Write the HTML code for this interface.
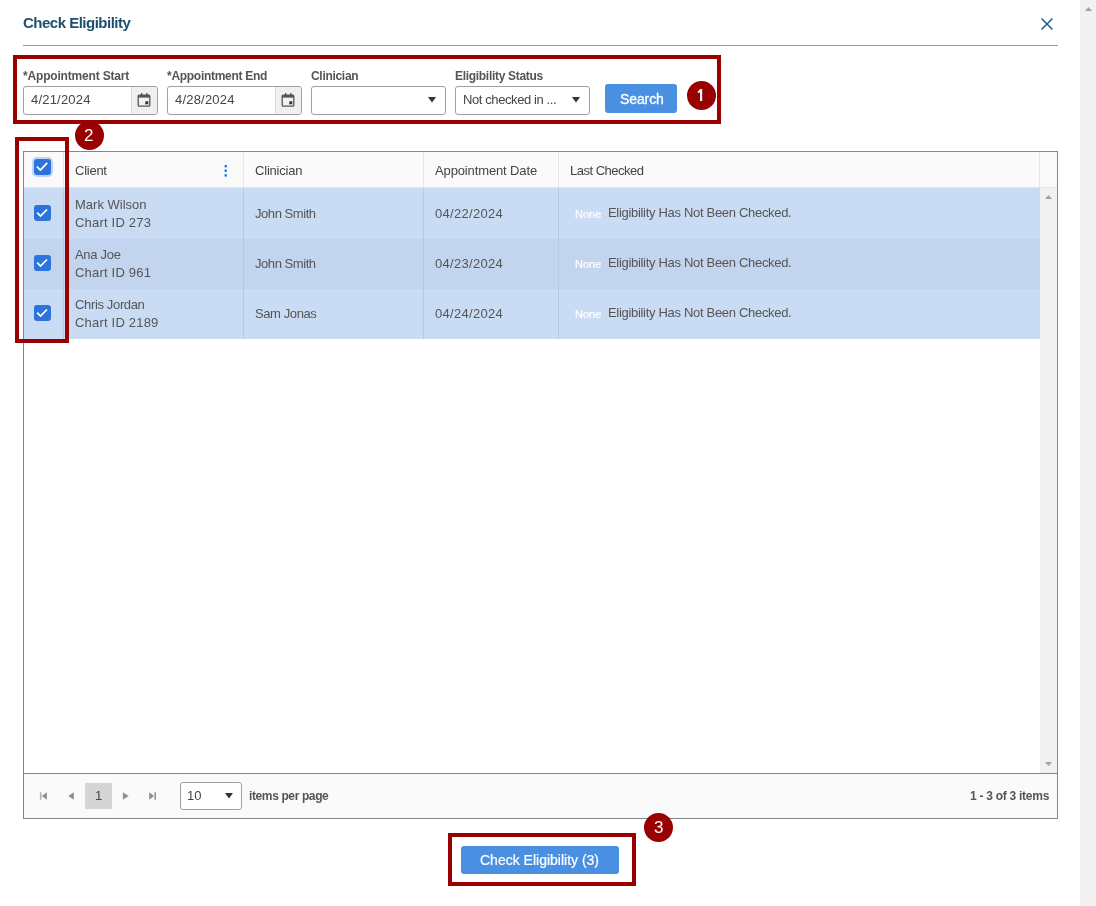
<!DOCTYPE html>
<html><head><meta charset="utf-8">
<style>
*{box-sizing:border-box;margin:0;padding:0}
html,body{width:1096px;height:906px;overflow:hidden;background:#fff;font-family:"Liberation Sans",sans-serif;color:#444}
div,span{position:absolute;white-space:nowrap;will-change:transform}
.t13{font-size:13px;color:#555}
.lbl{font-size:12px;font-weight:bold;color:#555;top:69px}
.inp{top:86px;height:29px;border:1px solid #a0a0a0;border-radius:3px;background:#fff;width:135px}
.cal{left:107px;top:0;width:26px;height:27px;background:#f0f0f0;border-left:1px solid #dcdcdc;border-radius:0 2px 2px 0}
.btn{background:#4a90e2;border-radius:3px}
.red{border:4px solid #990000}
.badge{width:29px;height:29px;border-radius:50%;background:#990000}
.bt{font-size:17px;color:#fff}
.hd{font-size:13px;color:#444;top:163px}
.cell{font-size:13px;color:#555}
.vd{width:1px}
.cb{width:17px;height:16px;border-radius:3px;background:#2c74db;left:34px}
.none{font-size:11px;color:#fff;-webkit-text-stroke:0.2px #fff}
</style></head><body>
<!-- page scrollbar -->
<div style="left:1080px;top:0;width:16px;height:906px;background:#f1f1f1"></div>

<div style="left:23px;top:14px;font-size:15px;font-weight:bold;color:#1f4f6e;letter-spacing:-0.5px">Check Eligibility</div>
<div style="left:23px;top:45px;width:1035px;height:1px;background:#9a9a9a"></div>

<!-- filters -->
<div class="lbl" style="left:23px;letter-spacing:-0.18px">*Appointment Start</div>
<div class="lbl" style="left:167px;letter-spacing:-0.29px">*Appointment End</div>
<div class="lbl" style="left:311px;letter-spacing:-0.3px">Clinician</div>
<div class="lbl" style="left:455px;letter-spacing:-0.3px">Eligibility Status</div>

<div class="inp" style="left:23px"><div class="t13" style="left:7px;top:5px;color:#444;letter-spacing:0.2px">4/21/2024</div><div class="cal"></div></div>
<div class="inp" style="left:167px"><div class="t13" style="left:7px;top:5px;color:#444;letter-spacing:0.2px">4/28/2024</div><div class="cal"></div></div>
<div class="inp" style="left:311px"></div>
<div class="inp" style="left:455px"><div class="t13" style="left:7px;top:5px;color:#444;letter-spacing:-0.4px">Not checked in ...</div></div>
<div class="btn" style="left:605px;top:84px;width:72px;height:29px"><div style="left:15px;top:7px;font-size:14px;color:#fff;letter-spacing:-0.1px;-webkit-text-stroke:0.3px #fff">Search</div></div>

<div class="red" style="left:13px;top:55px;width:708px;height:69px"></div>
<div class="badge" style="left:687px;top:81px"></div>

<!-- table -->
<div style="left:23px;top:151px;width:1035px;height:668px;border:1px solid #858585;background:#fff"></div>
<div style="left:24px;top:152px;width:1033px;height:35px;background:#fafafa"></div>
<div style="left:24px;top:187px;width:1033px;height:1px;background:#e4e4e4"></div>
<div class="vd" style="left:63px;top:152px;height:35px;background:#e6e6e6"></div>
<div class="vd" style="left:243px;top:152px;height:35px;background:#e6e6e6"></div>
<div class="vd" style="left:423px;top:152px;height:35px;background:#e6e6e6"></div>
<div class="vd" style="left:558px;top:152px;height:35px;background:#e6e6e6"></div>
<div class="vd" style="left:1039px;top:152px;height:35px;background:#e6e6e6"></div>

<div style="left:24px;top:188px;width:1016px;height:51px;background:#cadcf4"></div>
<div style="left:24px;top:239px;width:1016px;height:50px;background:#c3d5ee"></div>
<div style="left:24px;top:289px;width:1016px;height:50px;background:#cadcf4"></div>
<div class="vd" style="left:63px;top:188px;height:151px;background:#b7c9e2"></div>
<div class="vd" style="left:243px;top:188px;height:151px;background:#b7c9e2"></div>
<div class="vd" style="left:423px;top:188px;height:151px;background:#b7c9e2"></div>
<div class="vd" style="left:558px;top:188px;height:151px;background:#b7c9e2"></div>

<div class="cb" style="top:159px;box-shadow:0 0 0 2px #bcd4f6"></div>
<div class="cb" style="top:205px"></div>
<div class="cb" style="top:255px"></div>
<div class="cb" style="top:305px"></div>

<div class="hd" style="left:75px;letter-spacing:-0.25px">Client</div>
<div class="hd" style="left:255px;letter-spacing:-0.2px">Clinician</div>
<div class="hd" style="left:435px;letter-spacing:-0.13px">Appointment Date</div>
<div class="hd" style="left:570px;letter-spacing:-0.5px">Last Checked</div>

<div class="cell" style="left:75px;top:197px">Mark Wilson</div>
<div class="cell" style="left:75px;top:215px;letter-spacing:0.2px">Chart ID 273</div>
<div class="cell" style="left:255px;top:206px;letter-spacing:-0.44px">John Smith</div>
<div class="cell" style="left:435px;top:206px;letter-spacing:0.3px">04/22/2024</div>
<div class="none" style="left:575px;top:208px">None</div>
<div class="cell" style="left:608px;top:205px;letter-spacing:-0.31px">Eligibility Has Not Been Checked.</div>

<div class="cell" style="left:75px;top:247px;letter-spacing:-0.3px">Ana Joe</div>
<div class="cell" style="left:75px;top:265px;letter-spacing:0.2px">Chart ID 961</div>
<div class="cell" style="left:255px;top:256px;letter-spacing:-0.44px">John Smith</div>
<div class="cell" style="left:435px;top:256px;letter-spacing:0.3px">04/23/2024</div>
<div class="none" style="left:575px;top:258px">None</div>
<div class="cell" style="left:608px;top:255px;letter-spacing:-0.31px">Eligibility Has Not Been Checked.</div>

<div class="cell" style="left:75px;top:297px;letter-spacing:-0.35px">Chris Jordan</div>
<div class="cell" style="left:75px;top:315px;letter-spacing:0.2px">Chart ID 2189</div>
<div class="cell" style="left:255px;top:306px;letter-spacing:-0.4px">Sam Jonas</div>
<div class="cell" style="left:435px;top:306px;letter-spacing:0.3px">04/24/2024</div>
<div class="none" style="left:575px;top:308px">None</div>
<div class="cell" style="left:608px;top:305px;letter-spacing:-0.31px">Eligibility Has Not Been Checked.</div>

<!-- inner scrollbar -->
<div style="left:1040px;top:188px;width:17px;height:585px;background:#f1f1f1"></div>

<!-- pager -->
<div style="left:24px;top:773px;width:1033px;height:1px;background:#858585"></div>
<div style="left:24px;top:774px;width:1033px;height:44px;background:#fafafa"></div>
<div style="left:85px;top:783px;width:27px;height:26px;background:#d5d5d5"></div>
<div style="left:95px;top:788px;font-size:13px;color:#444">1</div>
<div style="left:180px;top:782px;width:62px;height:28px;border:1px solid #a0a0a0;border-radius:3px;background:#fff"></div>
<div style="left:187px;top:788px;font-size:13px;color:#444">10</div>
<div style="left:249px;top:789px;font-size:12px;font-weight:bold;color:#555;letter-spacing:-0.38px">items per page</div>
<div style="left:970px;top:789px;font-size:12px;font-weight:bold;color:#555;letter-spacing:-0.27px">1 - 3 of 3 items</div>

<!-- bottom -->
<div class="btn" style="left:461px;top:846px;width:158px;height:28px"><div style="left:19px;top:6px;font-size:14px;color:#fff;-webkit-text-stroke:0.2px #fff">Check Eligibility (3)</div></div>
<div class="red" style="left:448px;top:833px;width:188px;height:53px"></div>

<div class="red" style="left:15px;top:137px;width:54px;height:206px"></div>
<div class="badge" style="left:75px;top:121px"><div class="bt" style="left:9px;top:5px">2</div></div>
<div class="badge" style="left:644px;top:813px"><div class="bt" style="left:10px;top:5px">3</div></div>

<!-- icon overlay -->
<svg style="position:absolute;left:0;top:0" width="1096" height="906" viewBox="0 0 1096 906">
  <!-- badge 1 digit -->
  <path d="M700 89L702.2 89L702.2 101L700 101L700 92.2Q699 92.9 697.8 93.1L697.8 91.3Q699.3 90.8 700 89Z" fill="#fff"/>
  <!-- close X -->
  <path d="M1041.5 18.5L1052.5 29.5M1052.5 18.5L1041.5 29.5" stroke="#1e6587" stroke-width="1.6" fill="none"/>
  <!-- page scroll up -->
  <path d="M1085 11L1092 11L1088.5 7Z" fill="#a3a3a3"/>
  <!-- calendar icons -->
  <g fill="none" stroke="#555" stroke-width="1.3">
    <rect x="138.2" y="95.2" width="11.6" height="11" rx="1"/>
    <rect x="282.2" y="95.2" width="11.6" height="11" rx="1"/>
  </g>
  <g fill="#555">
    <rect x="138" y="95" width="12" height="2.6"/>
    <rect x="141" y="93" width="1.4" height="3"/><rect x="146.2" y="93" width="1.4" height="3"/>
    <rect x="145.3" y="101.3" width="3" height="3" fill="#333"/>
    <rect x="282" y="95" width="12" height="2.6"/>
    <rect x="285" y="93" width="1.4" height="3"/><rect x="290.2" y="93" width="1.4" height="3"/>
    <rect x="289.3" y="101.3" width="3" height="3" fill="#333"/>
  </g>
  <!-- dropdown arrows -->
  <path d="M428 97L436 97L432 102.5Z" fill="#333"/>
  <path d="M572 97L580 97L576 102.5Z" fill="#333"/>
  <path d="M225 793L233 793L229 798.5Z" fill="#333"/>
  <!-- checkmarks -->
  <g stroke="#fff" stroke-width="1.75" fill="none">
    <path d="M36.9 166.6L40.4 170.1L47.2 162.9"/>
    <path d="M37.2 212.6L40.5 216L47 209.5"/>
    <path d="M37.2 262.6L40.5 266L47 259.5"/>
    <path d="M37.2 312.6L40.5 316L47 309.5"/>
  </g>
  <!-- kebab -->
  <g fill="#0a74fa">
    <rect x="224.6" y="165" width="2.2" height="2.4"/>
    <rect x="224.6" y="169.5" width="2.2" height="2.4"/>
    <rect x="224.6" y="174.2" width="2.2" height="2.4"/>
  </g>
  <!-- inner scroll arrows -->
  <path d="M1045 199L1052 199L1048.5 195Z" fill="#a3a3a3"/>
  <path d="M1045 762L1052 762L1048.5 766Z" fill="#a3a3a3"/>
  <!-- pager icons -->
  <g fill="#8f8f8f">
    <rect x="39.9" y="792.2" width="1.5" height="7.6" fill="#b0b0b0"/>
    <path d="M46.9 792.2L46.9 799.8L41.8 796Z"/>
    <path d="M73.8 792.2L73.8 799.8L68.3 796Z"/>
    <path d="M122.9 792.2L122.9 799.8L128.7 796Z"/>
    <path d="M149.2 792.2L149.2 799.8L154.1 796Z"/>
    <rect x="154.5" y="792.2" width="1.5" height="7.6"/>
  </g>
</svg>
</body></html>
